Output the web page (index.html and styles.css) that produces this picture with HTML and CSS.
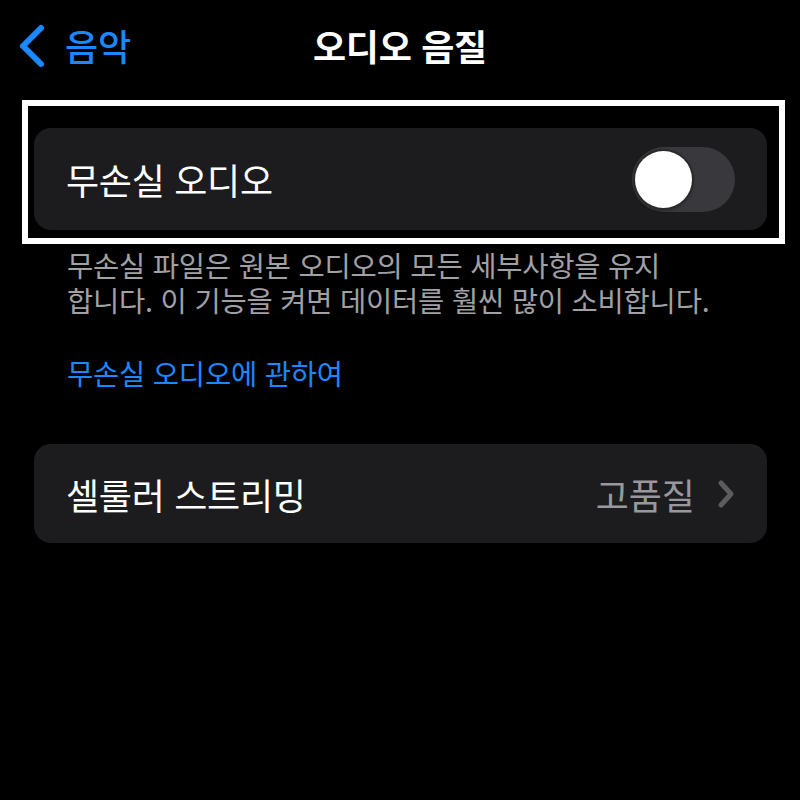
FILE: index.html
```html
<!DOCTYPE html>
<html lang="ko">
<head>
    <meta charset="UTF-8">
    <meta name="viewport" content="width=device-width, initial-scale=1.0">
    <title>오디오 음질</title>
    <link rel="stylesheet" href="styles.css">
</head>
<body>
    <header class="navbar">
        <a class="back" href="#">
            <svg class="back-icon" width="30" height="48" viewBox="0 0 30 48">
                <polyline points="23,7 5,25 23,43" fill="none" stroke="currentColor" stroke-width="6" stroke-linecap="round" stroke-linejoin="round"/>
            </svg>
            <span>음악</span>
        </a>
        <h1 class="title">오디오 음질</h1>
        <div></div>
    </header>

    <main class="content">
        <div class="group highlighted">
            <div class="cell cell-tall">
                <span class="cell-label">무손실 오디오</span>
                <div class="switch">
                    <div class="knob"></div>
                </div>
            </div>
            <!-- white marker frame drawn over the first group -->
            <div class="marker"></div>
        </div>
        <p class="footnote">무손실 파일은 원본 오디오의 모든 세부사항을 유지<br>합니다. 이 기능을 켜면 데이터를 훨씬 많이 소비합니다.</p>
        <a class="link" href="#">무손실 오디오에 관하여</a>

        <div class="group">
            <div class="cell">
                <span class="cell-label">셀룰러 스트리밍</span>
                <span class="cell-value">고품질</span>
                <svg class="disclosure" width="18" height="30" viewBox="0 0 18 30">
                    <polyline points="4,4 14,15 4,26" fill="none" stroke="currentColor" stroke-width="5" stroke-linecap="round" stroke-linejoin="round"/>
                </svg>
            </div>
        </div>
    </main>
</body>
</html>
```

FILE: styles.css
```css
body {
    margin: 0;
    padding: 0;
    background-color: #000;
    color: #fff;
    font-family: "Noto Sans CJK KR", "Noto Sans", sans-serif;
    width: 800px;
    height: 800px;
    overflow: hidden;
}
.navbar {
    display: grid;
    grid-template-columns: 1fr auto 1fr;
    align-items: center;
    height: 90px;
    padding: 0 20px;
}
.back {
    display: flex;
    align-items: center;
    gap: 17px;
    color: #1a88ff;
    text-decoration: none;
    font-size: 36px;
    font-weight: 500;
}
.back-icon {
    display: block;
    margin-left: -2px;
}
.title {
    margin: 0;
    font-size: 36px;
    font-weight: 600;
    letter-spacing: -0.3px;
}
.content {
    padding: 38px 33px 0 34px;
}
.group {
    position: relative;
    background-color: #1c1c1e;
    border-radius: 17px;
}
.cell {
    display: flex;
    align-items: center;
    height: 99px;
    padding: 0 32px 0 32px;
}
.cell-tall {
    height: 102px;
}
.cell-label {
    flex: 1;
    font-size: 36px;
    letter-spacing: -0.3px;
}
.cell-value {
    font-size: 36px;
    color: #98989e;
    margin-right: 22px;
}
.disclosure {
    display: block;
    color: #5c5c60;
}
.switch {
    width: 103px;
    height: 65px;
    border-radius: 33px;
    background-color: #39393d;
    display: flex;
    align-items: center;
    padding-left: 3px;
    box-sizing: border-box;
}
.knob {
    width: 57px;
    height: 57px;
    border-radius: 50%;
    background-color: #fff;
    box-shadow: 0 0 0 2px #2a2a2d, 0 2px 4px rgba(0, 0, 0, 0.4);
}
.marker {
    position: absolute;
    top: -28px;
    left: -12px;
    right: -18px;
    bottom: -14px;
    border: 6px solid #fff;
    pointer-events: none;
}
.footnote {
    margin: 17px 0 0 0;
    padding-left: 33px;
    font-size: 28.5px;
    line-height: 35px;
    color: #a0a0a5;
    letter-spacing: -0.2px;
}
.link {
    display: block;
    margin-top: 38px;
    margin-bottom: 54px;
    padding-left: 33px;
    font-size: 28.5px;
    line-height: 35px;
    color: #1a88ff;
    text-decoration: none;
    letter-spacing: -0.2px;
}
```
